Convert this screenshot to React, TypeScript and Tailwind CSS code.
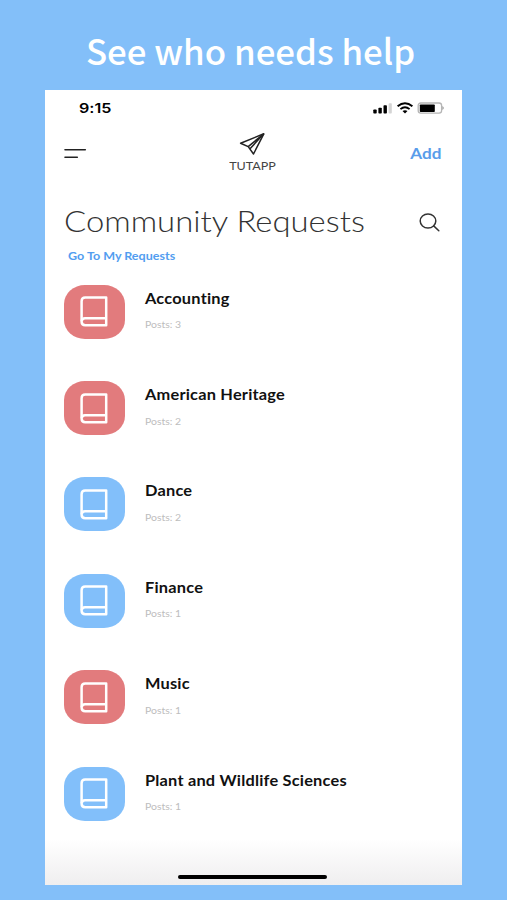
import React from 'react'

interface Subject {
  name: string
  posts: number
  color: 'red' | 'blue'
}

const subjects: Subject[] = [
  { name: 'Accounting', posts: 3, color: 'red' },
  { name: 'American Heritage', posts: 2, color: 'red' },
  { name: 'Dance', posts: 2, color: 'blue' },
  { name: 'Finance', posts: 1, color: 'blue' },
  { name: 'Music', posts: 1, color: 'red' },
  { name: 'Plant and Wildlife Sciences', posts: 1, color: 'blue' },
]

const BookIcon = () => (
  <svg className="w-7 h-[31px] -ml-px" viewBox="0 0 28 31" fill="none" stroke="white" strokeWidth="2.5" strokeLinejoin="round">
    <path d="M26.2 1.6H5.2Q1.6 1.6 1.6 5.2V25.6Q1.6 29.3 5.2 29.3H26.2Z" />
    <path d="M1.8 25Q2 22.2 5 22.2H26.2" />
  </svg>
)

const StatusIcons = () => (
  <svg className="w-[72px] h-3" viewBox="0 0 72 12">
    <rect x="0.3" y="7.5" width="3.4" height="4" rx="0.8" />
    <rect x="5.4" y="5.7" width="3.4" height="5.8" rx="0.8" />
    <rect x="10.5" y="3.2" width="3.4" height="8.3" rx="0.8" />
    <rect x="15.6" y="1.3" width="3.2" height="10.2" rx="0.8" fill="#d4d4d4" />
    <g fill="none" stroke="black" strokeWidth="1.9">
      <path d="M24.6 4.3Q32 -1.8 39.4 4.3" />
      <path d="M27.4 7.1Q32 3.2 36.6 7.1" />
    </g>
    <path d="M29.5 9.1Q32 7.2 34.5 9.1L32 11.5Z" />
    <rect x="45.2" y="1" width="23.4" height="10.2" rx="2.6" fill="none" stroke="#b5b5b5" strokeWidth="1.3" />
    <rect x="46.8" y="2.4" width="15" height="7.6" rx="0.8" />
    <path d="M69.4 4.1Q72.2 6 69.4 8.1Z" fill="#999" />
  </svg>
)

const SubjectRow: React.FC<{ subject: Subject }> = ({ subject }) => (
  <li className="flex h-[96.4px]">
    <div
      className={`flex items-center justify-center w-[61px] h-[54px] rounded-[21px/19px] ${
        subject.color === 'red' ? 'bg-[#e27b7d]' : 'bg-[#82bffa]'
      }`}
    >
      <BookIcon />
    </div>
    <div className="ml-5 pt-1 whitespace-nowrap">
      <h2 className="w-fit origin-left scale-x-[1.145] text-[14.3px] tracking-[0.18px] leading-5 font-bold text-[#111]">{subject.name}</h2>
      <p className="w-fit mt-[8.5px] origin-left scale-x-[1.14] text-[9.2px] leading-4 text-[#bdbdbd]">Posts: {subject.posts}</p>
    </div>
  </li>
)

export default function App() {
  return (
    <div className="w-[507px] h-[900px] overflow-hidden bg-[#83bff9] flex flex-col pl-[45px]">
      <h1 className="h-[89.5px] pt-[30px] w-[411px] text-center text-[34.8px] leading-10 font-medium text-white whitespace-nowrap font-['Noto_Sans_CJK_JP',sans-serif]">
        See who needs help
      </h1>

      <main className="flex flex-col w-[417px] h-[795.5px] bg-[linear-gradient(to_bottom,white_calc(100%-46px),#efeeef)] font-['Lato',sans-serif] [font-variant-ligatures:none]">
        <div className="flex items-center justify-between h-[37px] pl-[34px] pr-[17px]">
          <span className="origin-left scale-x-[1.18] text-[13.7px] font-semibold font-['Inter',sans-serif]">9:15</span>
          <StatusIcons />
        </div>

        <header className="grid grid-cols-3 h-[56px] px-[19px]">
          <svg className="mt-[21px] w-6 h-3" viewBox="0 0 24 12" stroke="#222" strokeWidth="1.6" strokeLinecap="round">
            <path d="M1 1.8H21.3M1 9.2H13.3" />
          </svg>
          <div className="flex flex-col items-center -ml-[2px]">
            <svg className="mt-[6px] w-[26px] h-[22px]" viewBox="0 0 26 22" fill="none" stroke="#222" strokeWidth="1.5" strokeLinejoin="round">
              <path d="M24.8 .8L1.6 10.2L9.2 13.6L14.5 21Z" />
              <path d="M24.8 .8L9.2 13.6M24.8 .8L11 15.8" />
            </svg>
            <span className="mt-[3px] scale-x-[1.14] text-[11px] leading-4 text-[#444]">TUTAPP</span>
          </div>
          <button className="justify-self-end self-start mt-[17px] mr-[2px] origin-right scale-x-[1.18] text-[14.5px] leading-5 font-bold text-[#589cea]">
            Add
          </button>
        </header>

        <div className="flex items-center justify-between h-10 mt-[19px] pl-[18.5px] pr-[22.5px]">
          <h2 className="-mt-[3px] origin-left scale-x-[1.095] text-[30px] leading-10 font-light text-[#333] whitespace-nowrap">Community Requests</h2>
          <svg className="mt-[2px] w-[21px] h-[19px]" viewBox="0 0 21 19" fill="none" stroke="#333" strokeWidth="1.5" strokeLinecap="round">
            <ellipse cx="9" cy="8" rx="7.8" ry="7" />
            <path d="M14.7 12.9L19.8 17.7" />
          </svg>
        </div>
        <a className="w-fit ml-[23px] mt-[6px] origin-left scale-x-[1.14] text-[11px] leading-4 font-bold text-[#529df0]">Go To My Requests</a>

        <ul className="mt-[21.2px] pl-[18.5px]">
          {subjects.map((subject) => (
            <SubjectRow key={subject.name} subject={subject} />
          ))}
        </ul>

        <div className="mt-auto mb-[6px] ml-[133px] w-[149px] h-1 shrink-0 rounded-full bg-black" />
      </main>
    </div>
  )
}
